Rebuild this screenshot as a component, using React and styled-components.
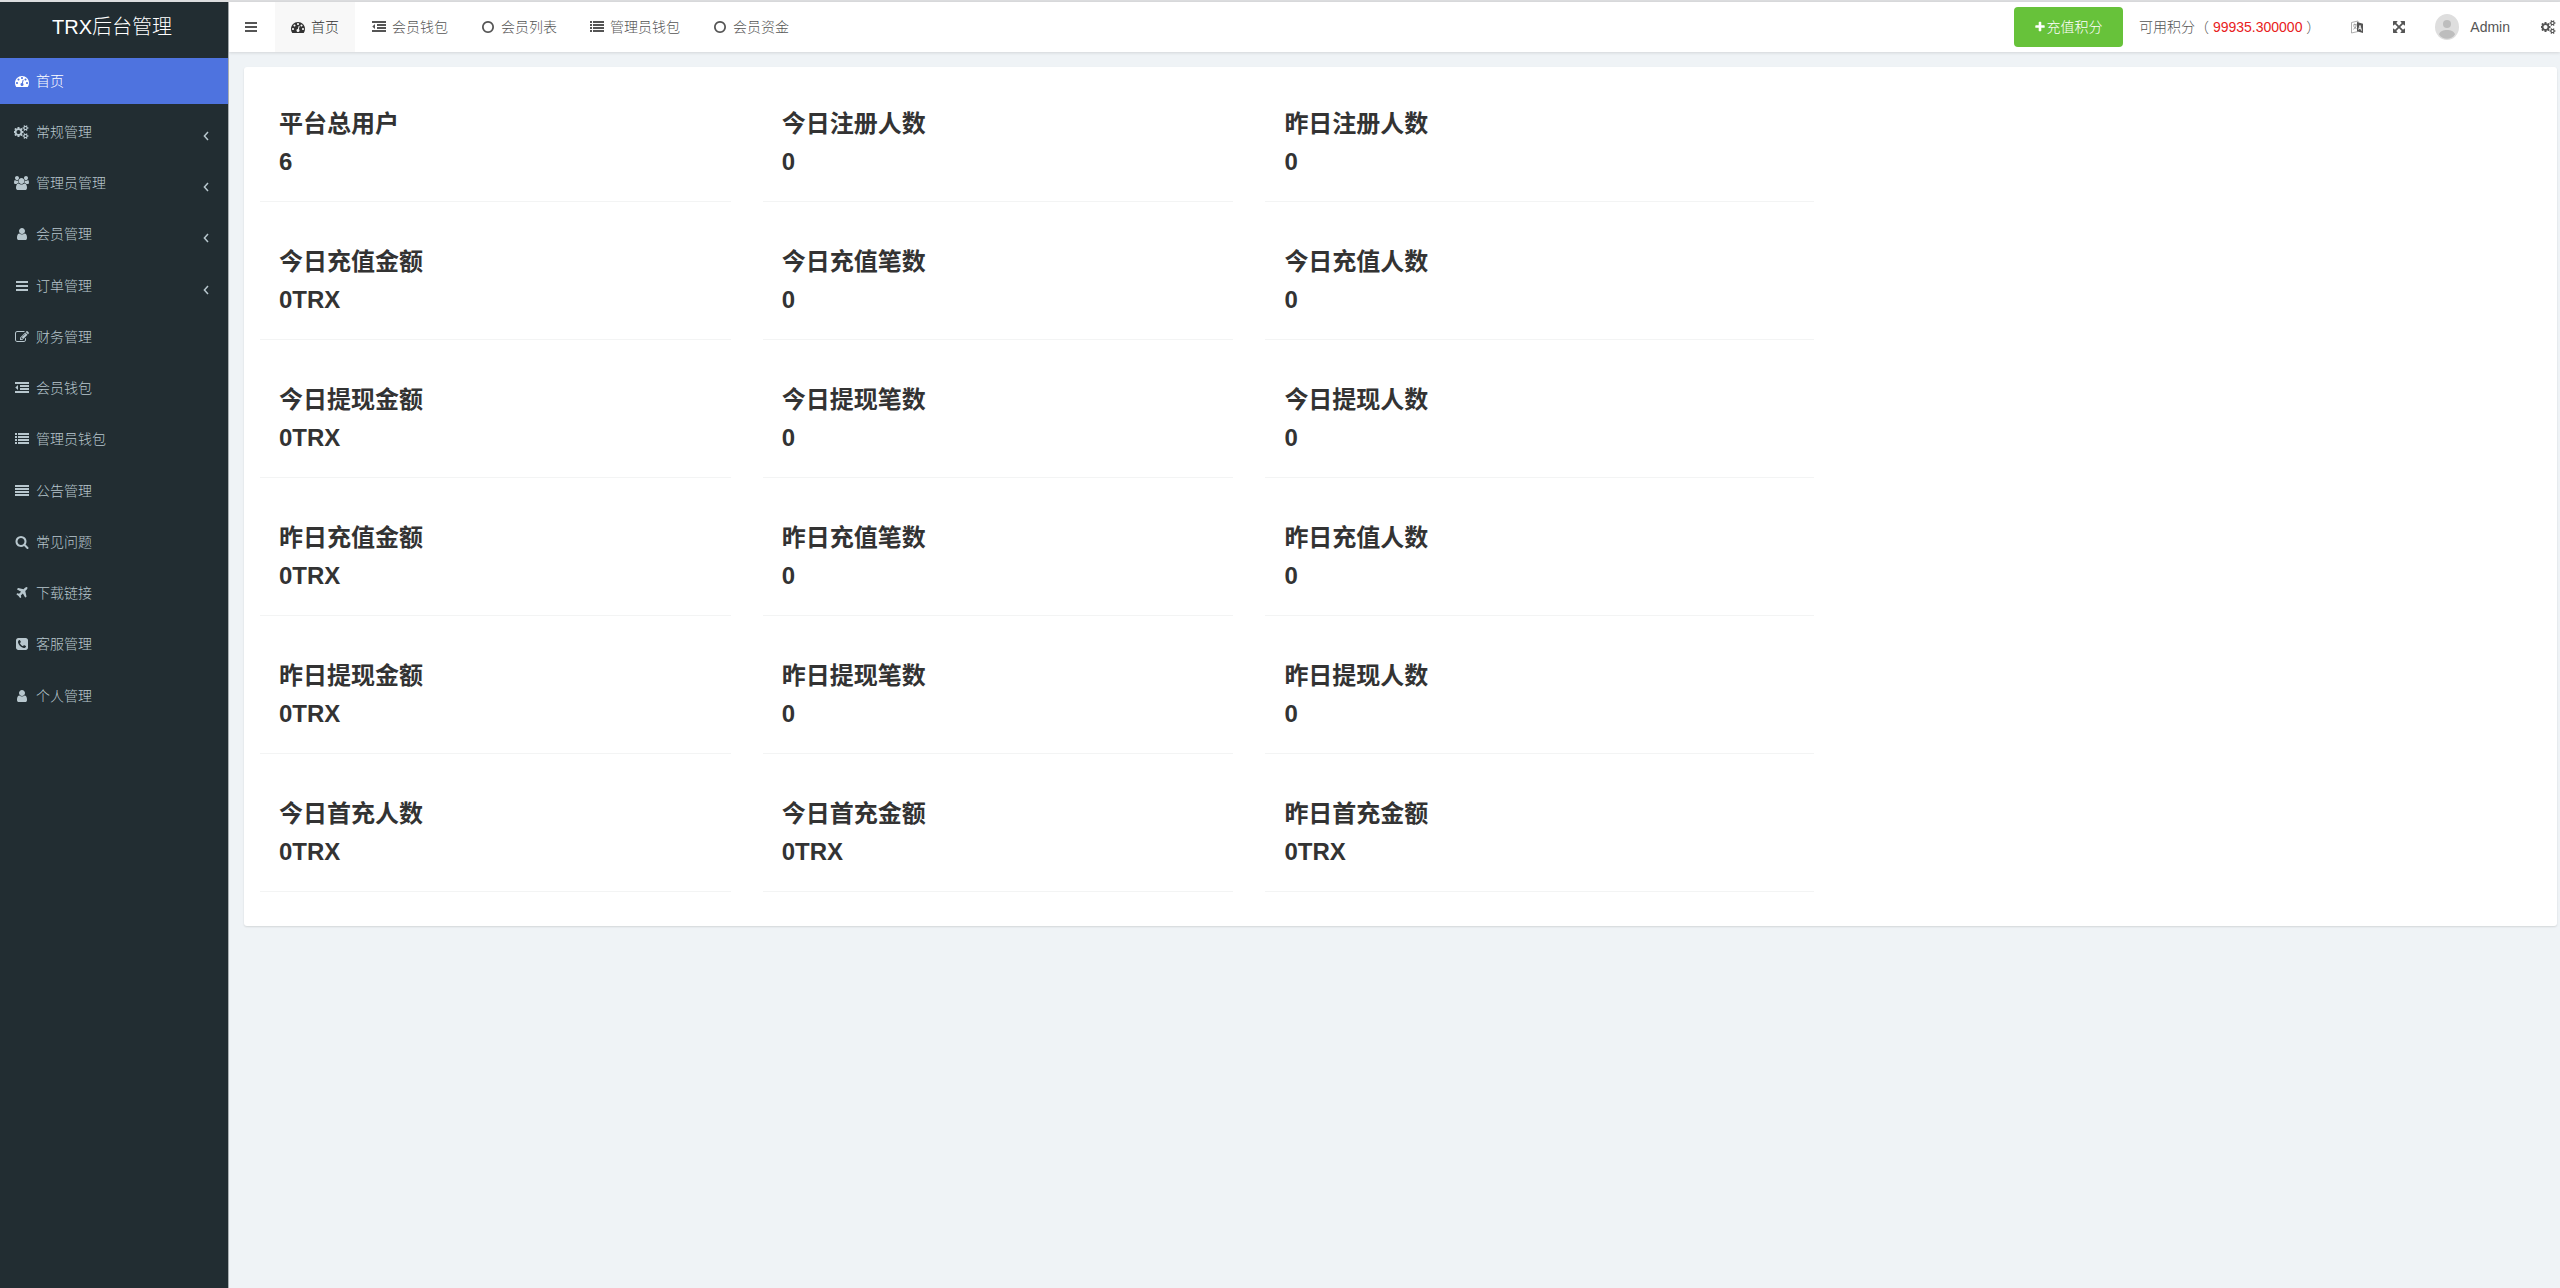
import styled, { createGlobalStyle } from "styled-components";

const paths = {
    dashboard: "M384 1152q0-53-37.5-90.5t-90.5-37.5-90.5 37.5-37.5 90.5 37.5 90.5 90.5 37.5 90.5-37.5 37.5-90.5zm192-448q0-53-37.5-90.5t-90.5-37.5-90.5 37.5-37.5 90.5 37.5 90.5 90.5 37.5 90.5-37.5 37.5-90.5zm428 481l101-382q6-26-7.5-48.5t-38.5-29.5-48 6.5-30 39.5l-101 382q-60 5-107 43.5t-63 98.5q-20 77 20 146t117 89 146-20 89-117q16-60-6-117t-72-91zm660-33q0-53-37.5-90.5t-90.5-37.5-90.5 37.5-37.5 90.5 37.5 90.5 90.5 37.5 90.5-37.5 37.5-90.5zm-640-640q0-53-37.5-90.5t-90.5-37.5-90.5 37.5-37.5 90.5 37.5 90.5 90.5 37.5 90.5-37.5 37.5-90.5zm448 192q0-53-37.5-90.5t-90.5-37.5-90.5 37.5-37.5 90.5 37.5 90.5 90.5 37.5 90.5-37.5 37.5-90.5zm320 448q0 261-141 483-19 29-54 29h-1402q-35 0-54-29-141-221-141-483 0-182 71-348t191-286 286-191 348-71 348 71 286 191 191 286 71 348z",
    cogs: "M832 896q0-106-75-181t-181-75-181 75-75 181 75 181 181 75 181-75 75-181zm768 512q0-52-38-90t-90-38-90 38-38 90q0 53 37.5 90.5t90.5 37.5 90.5-37.5 37.5-90.5zm0-1024q0-52-38-90t-90-38-90 38-38 90q0 53 37.5 90.5t90.5 37.5 90.5-37.5 37.5-90.5zm-384 421v185q0 10-7 19.5t-16 10.5l-155 24q-11 35-32 76 34 48 90 115 7 11 7 20 0 12-7 19-23 30-82.5 89.5t-78.5 59.5q-11 0-21-7l-115-90q-37 19-77 31-11 108-23 155-7 24-30 24h-186q-11 0-20-7.5t-10-17.5l-23-153q-34-10-75-31l-118 89q-7 7-20 7-11 0-21-8-144-133-144-160 0-9 7-19 10-14 41-53t47-61q-23-44-35-82l-152-24q-10-1-17-9.5t-7-19.5v-185q0-10 7-19.5t16-10.5l155-24q11-35 32-76-34-48-90-115-7-11-7-20 0-12 7-20 22-30 82-89t79-59q11 0 21 7l115 90q34-18 77-32 11-108 23-154 7-24 30-24h186q11 0 20 7.5t10 17.5l23 153q34 10 75 31l118-89q8-7 20-7 11 0 21 8 144 133 144 160 0 8-7 19-12 16-42 54t-45 60q23 48 34 82l152 23q10 2 17 10.5t7 19.5zm640 533v140q0 16-149 31-12 27-30 52 51 113 51 138 0 4-4 7-122 71-124 71-8 0-46-47t-52-68q-20 2-30 2t-30-2q-14 21-52 68t-46 47q-2 0-124-71-4-3-4-7 0-25 51-138-18-25-30-52-149-15-149-31v-140q0-16 149-31 13-29 30-52-51-113-51-138 0-4 4-7 4-2 35-20t59-34 30-16q8 0 46 46.5t52 67.5q20-2 30-2t30 2q51-71 92-112l6-2q4 0 124 70 4 3 4 7 0 25-51 138 17 23 30 52 149 15 149 31zm0-1024v140q0 16-149 31-12 27-30 52 51 113 51 138 0 4-4 7-122 71-124 71-8 0-46-47t-52-68q-20 2-30 2t-30-2q-14 21-52 68t-46 47q-2 0-124-71-4-3-4-7 0-25 51-138-18-25-30-52-149-15-149-31v-140q0-16 149-31 13-29 30-52-51-113-51-138 0-4 4-7 4-2 35-20t59-34 30-16q8 0 46 46.5t52 67.5q20-2 30-2t30 2q51-71 92-112l6-2q4 0 124 70 4 3 4 7 0 25-51 138 17 23 30 52 149 15 149 31z",
    group: "M593 896q-162 5-265 128h-134q-82 0-138-40.5t-56-118.5q0-353 124-353 6 0 43.5 21t97.5 42.5 119 21.5q67 0 133-23-5 37-5 66 0 139 81 256zm1071 637q0 120-73 189.5t-194 69.5h-874q-121 0-194-69.5t-73-189.5q0-53 3.5-103.5t14-109 26.5-108.5 43-97.5 62-81 85.5-53.5 111.5-20q10 0 43 21.5t73 48 107 48 135 21.5 135-21.5 107-48 73-48 43-21.5q61 0 111.5 20t85.5 53.5 62 81 43 97.5 26.5 108.5 14 109 3.5 103.5zm-1024-1277q0 106-75 181t-181 75-181-75-75-181 75-181 181-75 181 75 75 181zm704 384q0 159-112.5 271.5t-271.5 112.5-271.5-112.5-112.5-271.5 112.5-271.5 271.5-112.5 271.5 112.5 112.5 271.5zm576 225q0 78-56 118.5t-138 40.5h-134q-103-123-265-128 81-117 81-256 0-29-5-66 66 23 133 23 59 0 119-21.5t97.5-42.5 43.5-21q124 0 124 353zm-128-609q0 106-75 181t-181 75-181-75-75-181 75-181 181-75 181 75 75 181z",
    user: "M1536 1399q0 109-62.5 187t-150.5 78h-854q-88 0-150.5-78t-62.5-187q0-85 8.5-160.5t31.5-152 58.5-131 94-89 134.5-34.5q131 128 313 128t313-128q76 0 134.5 34.5t94 89 58.5 131 31.5 152 8.5 160.5zm-256-887q0 159-112.5 271.5t-271.5 112.5-271.5-112.5-112.5-271.5 112.5-271.5 271.5-112.5 271.5 112.5 112.5 271.5z",
    bars: "M128 256h1536v256h-1536zM128 768h1536v256h-1536zM128 1280h1536v256h-1536z",
    edit: "M888 1184l116-116-152-152-116 116v56h96v96h56zm440-720q-16-16-33 1l-350 350q-17 17-1 33t33-1l350-350q17-17 1-33zm80 594v190q0 119-84.5 203.5t-203.5 84.5h-832q-119 0-203.5-84.5t-84.5-203.5v-832q0-119 84.5-203.5t203.5-84.5h832q63 0 117 25 15 7 18 23 3 17-9 29l-49 49q-14 14-32 8-23-6-45-6h-832q-66 0-113 47t-47 113v832q0 66 47 113t113 47h832q66 0 113-47t47-113v-126q0-13 9-22l64-64q15-15 35-7t20 29zm-96-738l288 288-672 672h-288v-288zm444 132l-92 92-288-288 92-92q28-28 68-28t68 28l152 152q28 28 28 68t-28 68z",
    outdent: "M0 128h1792v256h-1792zM640 512h1152v256h-1152zM640 896h1152v256h-1152zM0 1280h1792v256h-1792zM384 512v640l-350-320z",
    list: "M0 128h256v256h-256zM384 128h1408v256h-1408zM0 512h256v256h-256zM384 512h1408v256h-1408zM0 896h256v256h-256zM384 896h1408v256h-1408zM0 1280h256v256h-256zM384 1280h1408v256h-1408z",
    justify: "M0 128h1792v256h-1792zM0 512h1792v256h-1792zM0 896h1792v256h-1792zM0 1280h1792v256h-1792z",
    search: "M1216 832q0-185-131.5-316.5t-316.5-131.5-316.5 131.5-131.5 316.5 131.5 316.5 316.5 131.5 316.5-131.5 131.5-316.5zm512 832q0 52-38 90t-90 38q-54 0-90-38l-343-342q-179 124-399 124-143 0-273.5-55.5t-225-150-150-225-55.5-273.5 55.5-273.5 150-225 225-150 273.5-55.5 273.5 55.5 225 150 150 225 55.5 273.5q0 220-124 399l343 343q37 37 37 90z",
    plane: "M1568 160q44 52 12 148t-108 172l-161 161 160 696q5 19-12 33l-128 96q-7 6-19 6-4 0-7-1-15-3-21-16l-279-508-259 259 53 194q5 17-8 31l-96 96q-9 9-23 9h-2q-15-2-24-13l-189-252-252-189q-11-7-13-23-1-13 9-25l96-97q9-9 23-9 6 0 8 1l194 53 259-259-508-279q-14-8-17-24-2-16 9-27l128-128q14-13 30-8l665 159 160-160q76-76 172-108t148 12z",
    phone: "M1408 1193q0-11-2-16t-18-16.5-40.5-25-47.5-26.5-45.5-25-28.5-15q-5-3-19-13t-25-15-21-5q-15 0-36.5 20.5t-39.5 45-38.5 45-33.5 20.5q-7 0-16.5-3.5t-15.5-6.5-17-9.5-14-8.5q-99-55-170-126.5t-127-170.5q-2-3-8.5-14t-9.5-17-6.5-15.5-3.5-16.5q0-13 20.5-33.5t45-38.5 45-39.5 20.5-36.5q0-10-5-21t-15-25-13-19q-3-6-15-28.5t-25-45.5-26.5-47.5-25-40.5-16.5-18-16-2q-48 0-101 22-46 21-80 94.5t-34 130.5q0 16 2.5 34t5 30.5 9 33 10 29.5 12.5 33 11 30q60 164 216.5 320.5t320.5 216.5q6 2 30 11t33 12.5 29.5 10 33 9 30.5 5 34 2.5q57 0 130.5-34t94.5-80q22-53 22-101zm256-777v960q0 119-84.5 203.5t-203.5 84.5h-960q-119 0-203.5-84.5t-84.5-203.5v-960q0-119 84.5-203.5t203.5-84.5h960q119 0 203.5 84.5t84.5 203.5z",
    circle: "M896 352q-148 0-273 73t-198 198-73 273 73 273 198 198 273 73 273-73 198-198 73-273-73-273-198-198-273-73zm768 544q0 209-103 385.5t-279.5 279.5-385.5 103-385.5-103-279.5-279.5-103-385.5 103-385.5 279.5-279.5 385.5-103 385.5 103 279.5 279.5 103 385.5z",
    expand: "M1411 541l-355 355 355 355 144-144q29-31 70-14 39 17 39 59v448q0 26-19 45t-45 19h-448q-42 0-59-40-17-39 14-69l144-144-355-355-355 355 144 144q31 30 14 69-17 40-59 40h-448q-26 0-45-19t-19-45v-448q0-42 40-59 39-17 69 14l144 144 355-355-355-355-144 144q-19 19-45 19-12 0-24-5-40-17-40-59v-448q0-26 19-45t45-19h448q42 0 59 40 17 39-14 69l-144 144 355 355 355-355-144-144q-31-30-14-69 17-40 59-40h448q26 0 45 19t19 45v448q0 42-39 59-13 5-25 5-26 0-45-19z",
    plus: "M1600 736v192q0 40-28 68t-68 28h-416v416q0 40-28 68t-68 28h-192q-40 0-68-28t-28-68v-416h-416q-40 0-68-28t-28-68v-192q0-40 28-68t68-28h416v-416q0-40 28-68t68-28h192q40 0 68 28t28 68v416h416q40 0 68 28t28 68z",
};

function Icon({ name }) {
    const wide = name === "cogs" || name === "group";
    return (
        <svg width={wide ? 15 : 14} height="14" viewBox={wide ? "0 0 1920 1792" : "0 0 1792 1792"} fill="currentColor" aria-hidden="true">
            <path d={paths[name]} />
        </svg>
    );
}

const menu = [
    { icon: "dashboard", text: "首页", active: true },
    { icon: "cogs", text: "常规管理", sub: true },
    { icon: "group", text: "管理员管理", sub: true },
    { icon: "user", text: "会员管理", sub: true },
    { icon: "bars", text: "订单管理", sub: true },
    { icon: "edit", text: "财务管理" },
    { icon: "outdent", text: "会员钱包" },
    { icon: "list", text: "管理员钱包" },
    { icon: "justify", text: "公告管理" },
    { icon: "search", text: "常见问题" },
    { icon: "plane", text: "下载链接" },
    { icon: "phone", text: "客服管理" },
    { icon: "user", text: "个人管理" },
];

const tabs = [
    { icon: "dashboard", text: "首页", active: true },
    { icon: "outdent", text: "会员钱包" },
    { icon: "circle", text: "会员列表" },
    { icon: "list", text: "管理员钱包" },
    { icon: "circle", text: "会员资金" },
];

const stats = [
    ["平台总用户", "6"], ["今日注册人数", "0"], ["昨日注册人数", "0"],
    ["今日充值金额", "0TRX"], ["今日充值笔数", "0"], ["今日充值人数", "0"],
    ["今日提现金额", "0TRX"], ["今日提现笔数", "0"], ["今日提现人数", "0"],
    ["昨日充值金额", "0TRX"], ["昨日充值笔数", "0"], ["昨日充值人数", "0"],
    ["昨日提现金额", "0TRX"], ["昨日提现笔数", "0"], ["昨日提现人数", "0"],
    ["今日首充人数", "0TRX"], ["今日首充金额", "0TRX"], ["昨日首充金额", "0TRX"],
];

export default function App() {
    return (
        <>
            <GlobalStyle />
            <Page>
                <Sidebar>
                    <Logo href="#">TRX后台管理</Logo>
                    <Menu>
                        {menu.map((item) => (
                            <li key={item.text}>
                                <MenuLink href="#" $active={item.active}>
                                    <IconBox><Icon name={item.icon} /></IconBox>
                                    <span>{item.text}</span>
                                    {item.sub && (
                                        <Arrow width="6" height="10" viewBox="0 0 6 10" aria-hidden="true">
                                            <path d="M5 1L1.4 5L5 9" fill="none" stroke="currentColor" strokeWidth="1.5" />
                                        </Arrow>
                                    )}
                                </MenuLink>
                            </li>
                        ))}
                    </Menu>
                </Sidebar>
                <Content>
                    <Header>
                        <Toggle aria-label="菜单"><Icon name="bars" /></Toggle>
                        <Tabs>
                            {tabs.map((tab) => (
                                <Tab href="#" key={tab.text} $active={tab.active}>
                                    <Icon name={tab.icon} />
                                    <span>{tab.text}</span>
                                </Tab>
                            ))}
                        </Tabs>
                        <Recharge><Icon name="plus" />充值积分</Recharge>
                        <Points>可用积分（ <b>99935.300000</b> ）</Points>
                        <Tools>
                            <ToolButton aria-label="语言">
                                <svg width="14" height="14" viewBox="0 0 14 14" aria-hidden="true">
                                    <path d="M1.5 2.5L8 1v10.5L1.5 13z" fill="#fff" stroke="#999" strokeWidth=".8" />
                                    <path d="M3 5.2l3.6-.9M4.6 3.7v1M3.4 9.2c1.6-.8 2.5-2 2.8-4.5M3.7 6.2c.6 1.2 1.5 2 2.8 2.4" fill="none" stroke="#777" strokeWidth=".7" />
                                    <path d="M7 2l6 1.8V13l-6-1.8z" fill="#555" />
                                    <path d="M8.6 9.6L10 5.4l1.5 5.2M9 8.3l2 .5" fill="none" stroke="#fff" strokeWidth=".9" />
                                </svg>
                            </ToolButton>
                            <ToolButton aria-label="全屏"><Icon name="expand" /></ToolButton>
                        </Tools>
                        <Account href="#">
                            <svg width="24" height="26" viewBox="0 0 24 26" aria-hidden="true">
                                <ellipse cx="12" cy="13" rx="12" ry="13" fill="#dedede" />
                                <circle cx="12" cy="10" r="4" fill="#bdbdbd" />
                                <path d="M4 20.500c1-3.800 4.500-4.600 8-4.600s7 .8 8 4.600c-2 3.200-5 4.300-8 4.300s-6-1.100-8-4.300z" fill="#bdbdbd" />
                            </svg>
                            Admin
                        </Account>
                        <ToolButton aria-label="设置"><Icon name="cogs" /></ToolButton>
                    </Header>
                    <Main>
                        <Card>
                            {stats.map(([title, value]) => (
                                <Stat key={title}>
                                    <h3>{title}</h3>
                                    <p>{value}</p>
                                </Stat>
                            ))}
                        </Card>
                    </Main>
                </Content>
            </Page>
        </>
    );
}

const GlobalStyle = createGlobalStyle`
* {
    box-sizing: border-box;
}
body {
    margin: 0;
    background: #eff3f6;
    color: #333;
    font-family: "Liberation Sans", "Noto Sans CJK SC", sans-serif;
    font-size: 14px;
    line-height: 20px;
}
a {
    color: inherit;
    text-decoration: none;
}
button {
    border: 0;
    padding: 0;
    background: none;
    color: inherit;
    font: inherit;
    cursor: pointer;
}
svg {
    display: block;
    flex: none;
}
`

const Page = styled.div`
    display: flex;
    min-height: 100vh;
    border-top: 2px solid #dcdddf;
`

const Sidebar = styled.aside`
    flex: none;
    width: 229px;
    background: #222d32;
    color: #b8c7ce;
    border-right: 1px solid #a9afb2;
`

const Logo = styled.a`
    display: block;
    height: 56px;
    padding-right: 4px;
    line-height: 51px;
    font-size: 20px;
    font-weight: 300;
    text-align: center;
    color: #fff;
`

const Menu = styled.ul`
    margin: 0;
    padding: 0;
    list-style: none;

    li {
        margin-bottom: 5px;
    }
    li:nth-child(4n) {
        margin-bottom: 6px;
    }
`

const MenuLink = styled.a`
    display: flex;
    align-items: center;
    gap: 7px;
    height: 46px;
    padding: 0 19px 0 14px;
    font-weight: 300;
    background: ${(p) => (p.$active ? "#4e73df" : "transparent")};
    color: ${(p) => (p.$active ? "#fff" : "inherit")};
`

const IconBox = styled.span`
    display: flex;
    justify-content: center;
    width: 15px;
`

const Arrow = styled.svg`
    margin: 8px 0 0 auto;
`

const Content = styled.div`
    flex: 1;
    min-width: 0;
`

const Header = styled.header`
    display: flex;
    align-items: center;
    height: 50px;
    padding-right: 4px;
    background: #fff;
    color: #555;
    box-shadow: 0 1px 3px rgba(0, 0, 0, 0.12);
`

const Toggle = styled.button`
    display: flex;
    align-items: center;
    justify-content: center;
    width: 44px;
    height: 50px;
`

const Tabs = styled.nav`
    display: flex;
    gap: 1px;
    margin: 0 auto 0 2px;
`

const Tab = styled.a`
    display: flex;
    align-items: center;
    gap: 6px;
    height: 50px;
    padding: 0 16px;
    font-weight: 300;
    background: ${(p) => (p.$active ? "#f8f8f8" : "transparent")};
    color: ${(p) => (p.$active ? "#333" : "#555")};
`

const Recharge = styled.button`
    display: flex;
    align-items: center;
    justify-content: center;
    width: 109px;
    height: 40px;
    margin-right: 16px;
    border-radius: 4px;
    background: #67c23a;
    color: #fff;
    font-weight: 300;

    svg {
        width: 12px;
    }
`

const Points = styled.span`
    font-weight: 300;
    white-space: nowrap;

    b {
        font-weight: 400;
        color: #e82020;
    }
`

const Tools = styled.div`
    display: flex;
    gap: 28px;
    margin: 0 29px 0 30px;
`

const ToolButton = styled.button`
    display: flex;
    align-items: center;
    height: 50px;
`

const Account = styled.a`
    display: flex;
    align-items: center;
    gap: 11px;
    margin-right: 31px;
`

const Main = styled.main`
    padding: 15px 3px 15px 15px;
`

const Card = styled.section`
    display: grid;
    grid-template-columns: 22% 22% 24%;
    row-gap: 20px;
    padding: 17px 12px 34px 16px;
    border-radius: 3px;
    background: #fff;
    box-shadow: 0 1px 2px rgba(0, 0, 0, 0.12);
`

const Stat = styled.div`
    margin-right: 32px;
    padding: 21px 19px 20px;
    border-bottom: 1px solid #f3f4f4;

    &:nth-child(3n) {
        margin-right: 0;
    }
    h3, p {
        margin: 0;
        font-size: 24px;
        font-weight: 700;
        line-height: 38px;
    }
`
